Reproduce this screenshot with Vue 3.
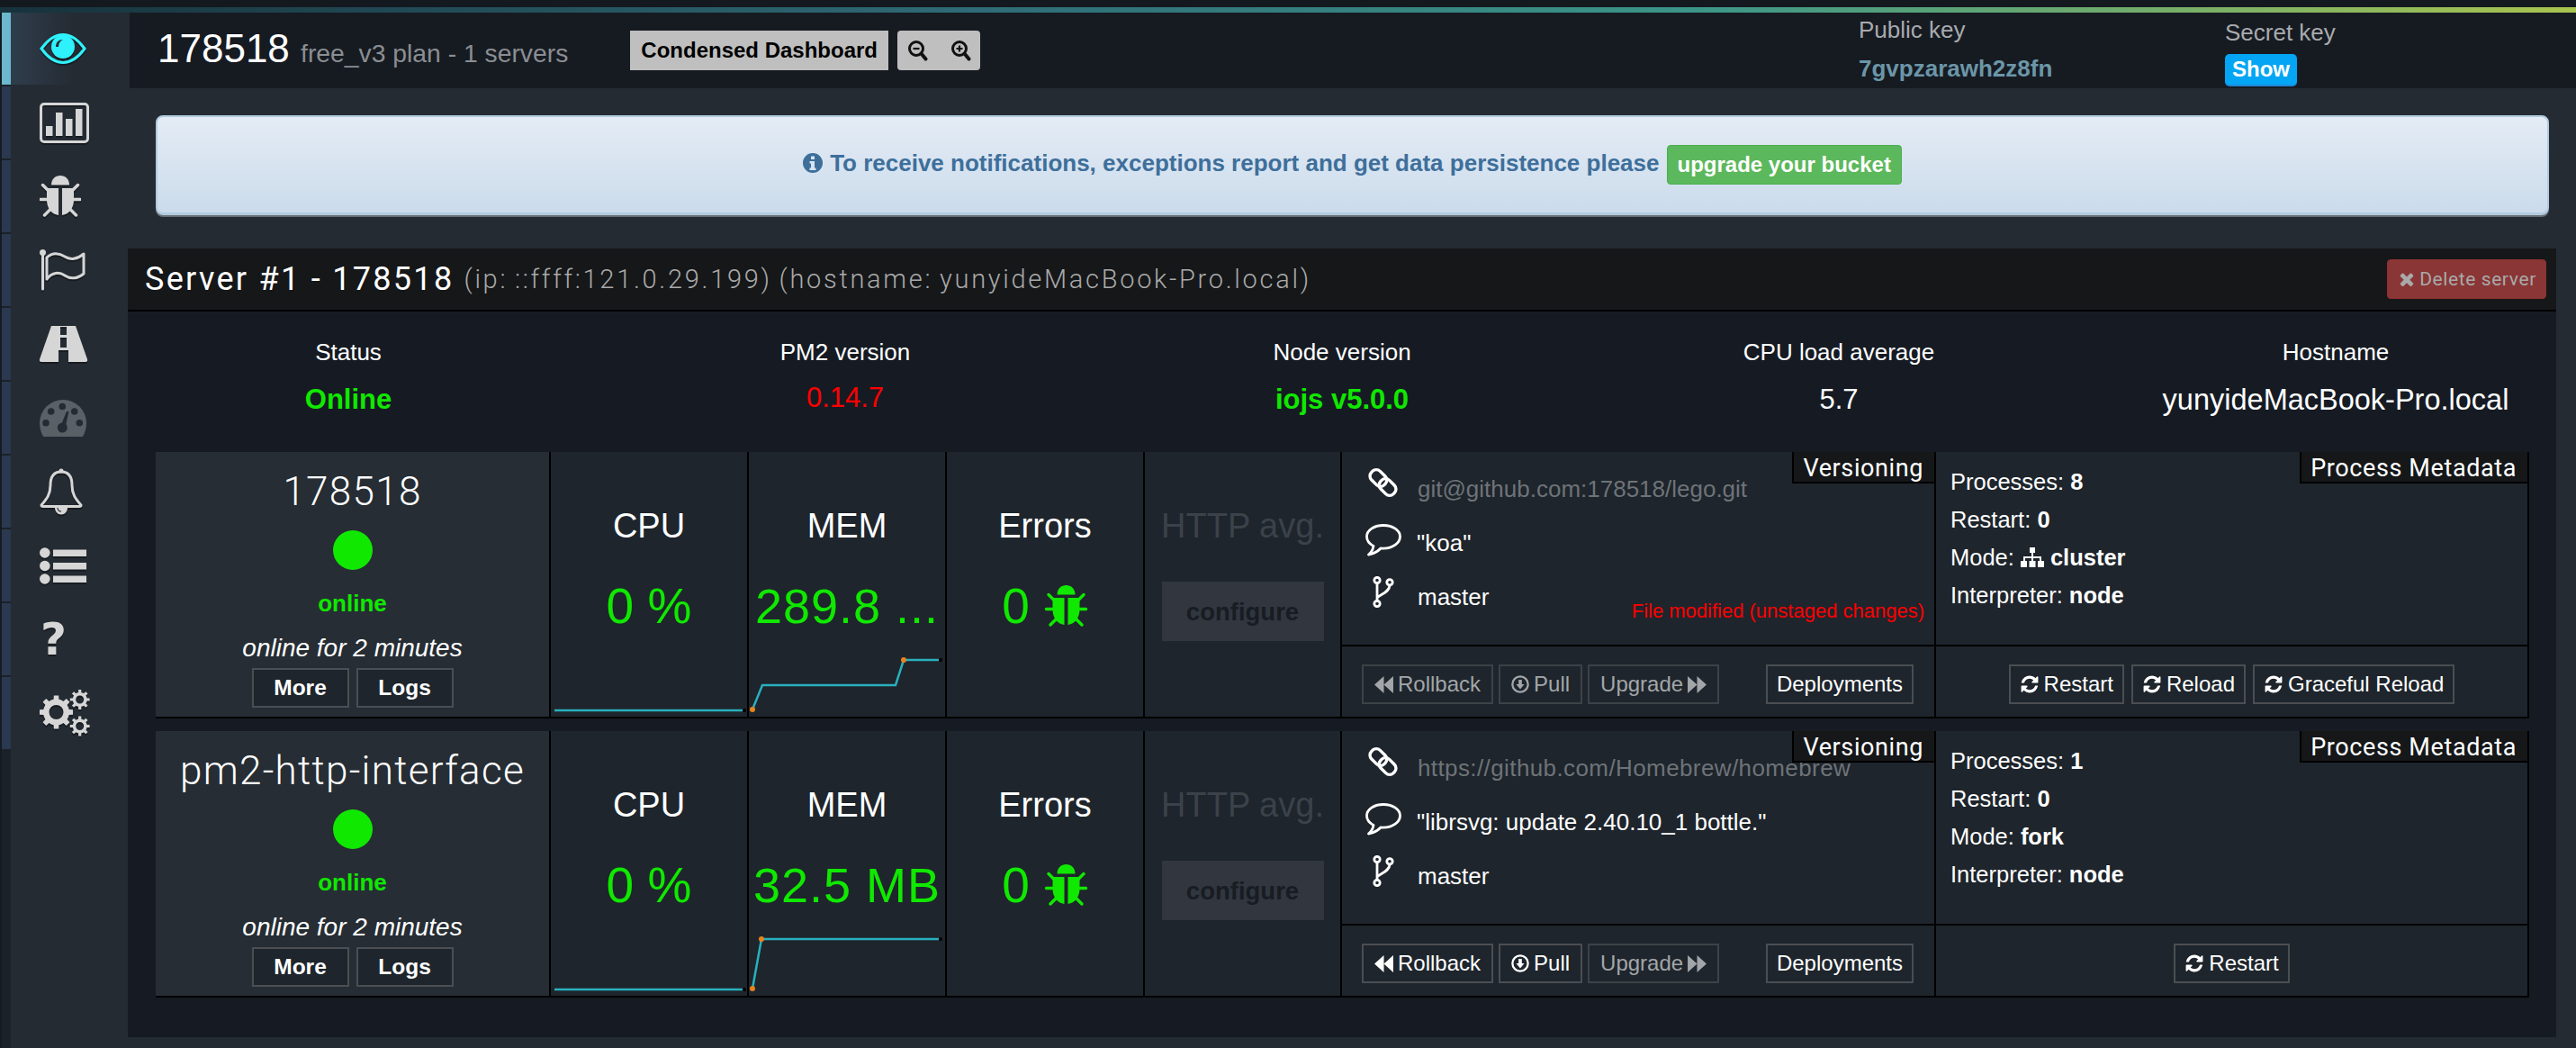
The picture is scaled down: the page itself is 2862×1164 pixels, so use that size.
<template>
  <div class="page">
    <svg class="defs" aria-hidden="true">
      <symbol id="i-bug" viewBox="0 0 46 47">
        <path d="M13 10.5C13 4 17.500 0 23 0s10 4 10 10.500z" fill="currentColor" />
        <path d="M8 14h13v30C13 43 8 36 8 27zM38 14H25v30c8-1 13-8 13-17z" fill="currentColor" />
        <path d="M3.500 10.500l6 6M42.500 10.500l-6 6M1 26.500h8M45 26.500h-8M5.500 44l7-7M40.500 44l-7-7" stroke="currentColor" stroke-width="3.500" stroke-linecap="round" fill="none" />
      </symbol>
      <symbol id="i-refresh" viewBox="0 0 1792 1792">
        <path fill="currentColor" d="M1639 1056q0 5-1 7-64 268-268 434.500t-478 166.500q-146 0-282.500-55t-243.500-157l-129 129q-19 19-45 19t-45-19-19-45v-448q0-26 19-45t45-19h448q26 0 45 19t19 45-19 45l-137 137q71 66 161 102t187 36q134 0 250-65t186-179q11-17 53-117 8-23 30-23h192q13 0 22.500 9.500t9.500 22.500zm25-800v448q0 26-19 45t-45 19h-448q-26 0-45-19t-19-45 19-45l138-138q-148-137-349-137-134 0-250 65t-186 179q-11 17-53 117-8 23-30 23h-199q-13 0-22.500-9.500t-9.500-22.500v-7q65-268 270-434.500t480-166.500q146 0 284 55.500t245 156.500l130-129q19-19 45-19t45 19 19 45z" />
      </symbol>
      <symbol id="i-back" viewBox="0 0 22 20">
        <path fill="currentColor" d="M11 0v20L0 10zM22 0v20L11 10z" />
      </symbol>
      <symbol id="i-forward" viewBox="0 0 22 20">
        <path fill="currentColor" d="M0 0v20l11-10zM11 0v20l11-10z" />
      </symbol>
      <symbol id="i-pull" viewBox="0 0 22 22">
        <circle cx="11" cy="11" r="9.500" fill="none" stroke="currentColor" stroke-width="2.500" />
        <path fill="currentColor" d="M9 5.500h4V11h3l-5 6-5-6h3z" />
      </symbol>
      <symbol id="i-link" viewBox="0 0 37 36">
        <g fill="none" stroke="currentColor" stroke-width="3.400">
          <rect x="3.400" y="6.250" width="20" height="13.500" rx="6" transform="rotate(45 13.400 13)" />
          <rect x="13.600" y="16.250" width="20" height="13.500" rx="6" transform="rotate(45 23.600 23)" />
        </g>
      </symbol>
      <symbol id="i-comment" viewBox="0 0 40 36">
        <path fill="none" stroke="currentColor" stroke-width="2.800" stroke-linejoin="round" d="M20 1.500C9.500 1.500 1.500 7 1.500 14c0 4.500 3 8 7.500 10.500-.5 3.500-3 7.500-5.500 9.500 5.500-1 10.500-3.500 13.500-7 1 0 2 .2 3 .2 10.500-.2 18.500-6.200 18.500-13.200S30.500 1.500 20 1.500z" />
      </symbol>
      <symbol id="i-branch" viewBox="0 0 24 35">
        <g fill="none" stroke="currentColor" stroke-width="2.800">
          <circle cx="5" cy="4.500" r="3.200" />
          <circle cx="19" cy="6.800" r="3.200" />
          <circle cx="5" cy="30.500" r="3.200" />
          <path d="M5 8v19M19 10c0 8-11 10-14 14" />
        </g>
      </symbol>
    </svg>

    <div class="topline"></div>

    <div class="shell">
      <nav class="sidebar">
        <div v-for="item in navItems" :key="item.name" :class="['nav-item', { active: item.name === 'eye' }]">
          <svg v-if="item.name === 'eye'" class="nav-icon eye" width="52" height="34" viewBox="0 0 52 34">
            <path d="M2 17C10 6 18 1.500 26 1.500S42 6 50 17C42 28 34 32.500 26 32.500S10 28 2 17z" fill="none" stroke="currentColor" stroke-width="3" />
            <circle cx="26" cy="15" r="13" fill="currentColor" />
            <path d="M18 15c0-5 3-8 8-8-3 1.500-5 4-5 8z" fill="#242b33" />
          </svg>
          <svg v-else-if="item.name === 'chart'" class="nav-icon" width="55" height="45" viewBox="0 0 55 45">
            <rect x="1.500" y="1.500" width="52" height="42" rx="3.500" fill="none" stroke="currentColor" stroke-width="3" />
            <path fill="currentColor" d="M7 26h7.500v11H7zM18 11h7.500v26H18zM29 18h7.500v19H29zM40 7h7.500v30H40z" />
          </svg>
          <svg v-else-if="item.name === 'bug'" class="nav-icon" width="46" height="47"><use href="#i-bug" /></svg>
          <svg v-else-if="item.name === 'flag'" class="nav-icon" width="51" height="46" viewBox="0 0 51 46">
            <circle cx="3.500" cy="3.500" r="3.500" fill="currentColor" />
            <path d="M3.500 4v40" stroke="currentColor" stroke-width="3" stroke-linecap="round" />
            <path d="M8 9c6-6 14-5 20-1s14 3 21-3v22c-7 6-15 6-21 2s-14-4-20 4z" fill="none" stroke="currentColor" stroke-width="3" stroke-linejoin="round" />
          </svg>
          <svg v-else-if="item.name === 'road'" class="nav-icon" width="53" height="40" viewBox="0 0 53 40">
            <path fill="currentColor" fill-rule="evenodd" d="M13 0h27l13 37q.5 3-2 3H32V27h-11v13H2q-2.500 0-2-3zM23 1v9h7V1zM23 13v11h7V13z" />
          </svg>
          <svg v-else-if="item.name === 'gauge'" class="nav-icon gauge" width="52" height="41" viewBox="0 0 52 41">
            <path fill="currentColor" d="M0 26a26 26 0 0 1 52 0c0 6-2 11-4 15H4c-2-4-4-9-4-15z" />
            <g fill="#242b33">
              <circle cx="7" cy="25.700" r="3.800" />
              <circle cx="12.700" cy="13" r="3.800" />
              <circle cx="25.300" cy="7.500" r="3.800" />
              <circle cx="38.700" cy="13" r="3.800" />
              <circle cx="44.300" cy="25.700" r="3.800" />
              <circle cx="25.300" cy="31" r="5.500" />
              <path d="M23 30l7-17h2.500l-4 18z" />
            </g>
          </svg>
          <svg v-else-if="item.name === 'bell'" class="nav-icon" width="48" height="52" viewBox="0 0 48 52">
            <path fill="none" stroke="currentColor" stroke-width="3" stroke-linejoin="round" d="M24 4c-9 0-12 7-12 15 0 11-5 16-10 22 0 1 1 1.500 2 1.500h40c1 0 2-.5 2-1.500-5-6-10-11-10-22 0-8-3-15-12-15z" />
            <circle cx="24" cy="3" r="2.500" fill="currentColor" />
            <path fill="currentColor" d="M17 44h14c0 4-3 7.500-7 7.500s-7-3.500-7-7.500z" />
            <path fill="none" stroke="#242b33" stroke-width="1.200" d="M20 44c0 2.500 2 4 4 4" />
          </svg>
          <svg v-else-if="item.name === 'list'" class="nav-icon" width="52" height="41" viewBox="0 0 52 41">
            <g fill="currentColor">
              <circle cx="5.800" cy="6" r="5.800" />
              <circle cx="5.800" cy="20.500" r="5.800" />
              <circle cx="5.800" cy="35" r="5.800" />
              <path d="M15 2.500h37V10H15zM15 17h37v7.500H15zM15 31.500h37V39H15z" />
            </g>
          </svg>
          <span v-else-if="item.name === 'help'" class="nav-icon help">?</span>
          <svg v-else class="nav-icon" width="56" height="52" viewBox="0 0 56 52">
            <path fill="currentColor" fill-rule="evenodd" :d="cogs" />
          </svg>
        </div>
      </nav>

      <main class="main">
        <header class="head">
          <h1 class="head-title">178518 <small>free_v3 plan - 1 servers</small></h1>
          <button class="grey-btn">Condensed Dashboard</button>
          <div class="grey-btn zoom-btn">
            <svg v-for="sym in ['M7.500 11h7', 'M7.500 11h7M11 7.500v7']" :key="sym" width="24" height="26" viewBox="0 0 24 26">
              <circle cx="11" cy="11" r="7.500" fill="none" stroke="#111" stroke-width="3" />
              <path d="M16.500 16.500l5 6" stroke="#111" stroke-width="4" stroke-linecap="round" />
              <path :d="sym" stroke="#111" stroke-width="2.200" />
            </svg>
          </div>
          <div class="keys">
            <div class="key-col public">
              <div class="key-label">Public key</div>
              <div class="key-value">7gvpzarawh2z8fn</div>
            </div>
            <div class="key-col secret">
              <div class="key-label">Secret key</div>
              <button class="show-btn">Show</button>
            </div>
          </div>
        </header>

        <div class="alert">
          <svg class="info" width="22" height="22" viewBox="0 0 22 22">
            <path fill="currentColor" fill-rule="evenodd" d="M11 0a11 11 0 1 0 0 22 11 11 0 0 0 0-22zM9 3.500h4v3.500H9zM7.500 9H13v7.500h1.500V19h-7v-2.500H9V11.500H7.500z" />
          </svg>
          <span class="alert-text">To receive notifications, exceptions report and get data persistence please</span>
          <button class="upgrade-btn">upgrade your bucket</button>
        </div>

        <section class="panel">
          <div class="panel-head">
            <span class="panel-title">Server #1 - 178518</span>
            <span class="panel-sub">(ip: ::ffff:121.0.29.199) (hostname: yunyideMacBook-Pro.local)</span>
            <button class="delete-btn">
              <svg width="22" height="22" viewBox="0 0 1792 1792"><path fill="currentColor" d="M1490 1322q0 40-28 68l-136 136q-28 28-68 28t-68-28l-294-294-294 294q-28 28-68 28t-68-28l-136-136q-28-28-28-68t28-68l294-294-294-294q-28-28-28-68t28-68l136-136q28-28 68-28t68 28l294 294 294-294q28-28 68-28t68 28l136 136q28 28 28 68t-28 68l-294 294 294 294q28 28 28 68z" /></svg>
              Delete server
            </button>
          </div>

          <div class="stats">
            <div v-for="stat in stats" :key="stat.label" class="stat">
              <div class="stat-label">{{ stat.label }}</div>
              <div :class="['stat-value', stat.tone]">{{ stat.value }}</div>
            </div>
          </div>

          <div v-for="proc in processes" :key="proc.name" class="proc">
            <div class="cell name-cell">
              <div class="proc-name">{{ proc.name }}</div>
              <div class="dot"></div>
              <div class="proc-state">online</div>
              <div class="proc-uptime">online for 2 minutes</div>
              <div class="name-btns">
                <button class="btn strong">More</button>
                <button class="btn strong">Logs</button>
              </div>
            </div>

            <div class="cell metric">
              <div class="metric-title">CPU</div>
              <div class="metric-value">0 %</div>
              <svg class="spark" width="218" height="71">
                <polyline points="4,64 213,64" class="spark-line" />
                <circle cx="215" cy="64" r="2" fill="#000" />
              </svg>
            </div>

            <div class="cell metric">
              <div class="metric-title">MEM</div>
              <div class="metric-value tight">{{ proc.mem }}</div>
              <svg class="spark" width="218" height="71">
                <polyline :points="proc.memLine" class="spark-line" />
                <circle v-for="pt in proc.memDots" :key="pt[0]" :cx="pt[0]" :cy="pt[1]" r="3" fill="#e8821e" />
                <circle cx="213" cy="8" r="2" fill="#000" />
              </svg>
            </div>

            <div class="cell metric">
              <div class="metric-title">Errors</div>
              <div class="metric-value errors">
                <span>0</span>
                <svg width="49" height="47"><use href="#i-bug" /></svg>
              </div>
            </div>

            <div class="cell metric">
              <div class="metric-title muted">HTTP avg.</div>
              <button class="configure-btn">configure</button>
            </div>

            <div class="cell split">
              <div class="split-top version">
                <div class="tag">Versioning</div>
                <div class="vrow url">
                  <svg class="vicon link" width="37" height="36"><use href="#i-link" /></svg>
                  <span :class="{ wide: !proc.modified }">{{ proc.url }}</span>
                </div>
                <div class="vrow">
                  <svg class="vicon comment" width="40" height="36"><use href="#i-comment" /></svg>
                  <span>{{ proc.comment }}</span>
                </div>
                <div class="vrow">
                  <svg class="vicon branch" width="24" height="35"><use href="#i-branch" /></svg>
                  <span>master</span>
                </div>
                <div v-if="proc.modified" class="modified">File modified (unstaged changes)</div>
              </div>
              <div class="split-bottom">
                <button :class="['btn', { dim: proc.locked }]">
                  <svg width="21" height="19"><use href="#i-back" /></svg> Rollback
                </button>
                <button :class="['btn', { dim: proc.locked }]">
                  <svg width="20" height="20"><use href="#i-pull" /></svg> Pull
                </button>
                <button class="btn dim">
                  Upgrade <svg width="21" height="19"><use href="#i-forward" /></svg>
                </button>
                <button class="btn deploy">Deployments</button>
              </div>
            </div>

            <div class="cell split">
              <div class="split-top meta">
                <div class="tag">Process Metadata</div>
                <div>Processes: <b>{{ proc.instances }}</b></div>
                <div>Restart: <b>0</b></div>
                <div class="mode">Mode:
                  <svg v-if="proc.mode === 'cluster'" width="26" height="24" viewBox="0 0 26 24">
                    <path fill="currentColor" d="M10 1h6v6h-6zM12 7h2v4h9v5h-2v-3h-7v3h-2v-3H5v3H3v-5h9zM0 16h7v7H0zM9.500 16h7v7h-7zM19 16h7v7h-7z" />
                  </svg>
                  <b>{{ proc.mode }}</b>
                </div>
                <div>Interpreter: <b>node</b></div>
              </div>
              <div class="split-bottom center">
                <button v-for="label in proc.actions" :key="label" class="btn">
                  <svg width="22" height="22"><use href="#i-refresh" /></svg> {{ label }}
                </button>
              </div>
            </div>
          </div>
        </section>
      </main>
    </div>
  </div>
</template>

<script setup>
const navItems = ['eye', 'chart', 'bug', 'flag', 'road', 'gauge', 'bell', 'list', 'help', 'cogs'].map((name) => ({ name }))

const stats = [
  { label: 'Status', value: 'Online', tone: 'good bold' },
  { label: 'PM2 version', value: '0.14.7', tone: 'bad' },
  { label: 'Node version', value: 'iojs v5.0.0', tone: 'good bold' },
  { label: 'CPU load average', value: '5.7', tone: '' },
  { label: 'Hostname', value: 'yunyideMacBook-Pro.local', tone: 'host' }
]

const processes = [
  {
    name: '178518',
    mem: '289.8 ...',
    memLine: '4,63 15,36 163,36 172,8 211,8',
    memDots: [[4, 63], [172, 8]],
    url: 'git@github.com:178518/lego.git',
    comment: '"koa"',
    modified: true,
    locked: true,
    instances: 8,
    mode: 'cluster',
    actions: ['Restart', 'Reload', 'Graceful Reload']
  },
  {
    name: 'pm2-http-interface',
    mem: '32.5 MB',
    memLine: '4,63 14,8 211,8',
    memDots: [[4, 63], [14, 8]],
    url: 'https://github.com/Homebrew/homebrew',
    comment: '"librsvg: update 2.40.10_1 bottle."',
    modified: false,
    locked: false,
    instances: 1,
    mode: 'fork',
    actions: ['Restart']
  }
]

// gear outline with a round hole, the three of them make the settings icon
function gear(cx, cy, outer, inner, teeth, hole) {
  const pts = []
  const step = (Math.PI * 2) / teeth
  for (let i = 0; i < teeth; i++) {
    const a = i * step
    const offsets = [[-0.5, inner], [-0.26, inner], [-0.18, outer], [0.18, outer], [0.26, inner]]
    offsets.forEach(([o, r]) => {
      const t = a + o * step
      pts.push(`${(cx + Math.cos(t) * r).toFixed(2)} ${(cy + Math.sin(t) * r).toFixed(2)}`)
    })
  }
  const ring = `M${cx - hole} ${cy}a${hole} ${hole} 0 1 0 ${hole * 2} 0a${hole} ${hole} 0 1 0 ${-hole * 2} 0z`
  return `M${pts.join('L')}z${ring}`
}

const cogs = gear(18.5, 25, 18.7, 14.5, 8, 8) + gear(44.7, 11, 11, 8, 8, 4.5) + gear(44.7, 40.5, 11, 8, 8, 4.5)
</script>

<style>
html, body {
  margin: 0;
  background: #242b33;
}
</style>

<style scoped>
.page {
  width: 2862px;
  height: 1164px;
  overflow: hidden;
  background: #141920;
  padding-top: 8px;
  box-sizing: border-box;
  font-family: "Liberation Sans", Arial, sans-serif;
  color: #fff;
}

.defs {
  position: absolute;
  width: 0;
  height: 0;
}

button {
  font-family: inherit;
  cursor: pointer;
}

.topline {
  height: 6px;
  background: linear-gradient(90deg, #17323c 0%, #2f6c77 38%, #3c9688 66%, #a9c44f 100%);
}

.shell {
  display: flex;
  height: 1150px;
}

/* sidebar */
.sidebar {
  width: 144px;
  flex: none;
  box-sizing: border-box;
  padding-left: 2px;
  background: linear-gradient(90deg, #161b22 2px, #1b2129 2px, #1b2129 12px, #242b33 12px);
}

.nav-item {
  height: 80px;
  margin-bottom: 2px;
  box-sizing: border-box;
  border-left: 10px solid #2a3950;
  padding-left: 32px;
  display: flex;
  align-items: center;
  color: #d6d6d6;
  background: #242b33;
}

.nav-item.active {
  border-left-color: #6bb8cf;
  background: linear-gradient(90deg, #2f3d4b 0, #2c3845 20px, #242b33 70px);
}

.nav-icon {
  filter: drop-shadow(0 2px 0 rgba(0, 0, 0, 0.35));
}

.nav-icon.eye {
  color: #2ef2fb;
}

.nav-icon.gauge {
  color: #596167;
  filter: none;
}

.nav-icon.help {
  font-family: "DejaVu Sans", sans-serif;
  font-weight: 700;
  font-size: 50px;
  line-height: 60px;
  margin-left: 1px;
}

/* header */
.main {
  flex: 1;
  min-width: 0;
  background: #242b33;
}

.head {
  height: 84px;
  box-sizing: border-box;
  padding-left: 31px;
  display: flex;
  align-items: center;
  background: #161b22;
}

.head-title {
  margin: 0 69px 0 0;
  font-size: 44px;
  font-weight: 400;
  white-space: nowrap;
  line-height: 50px;
}

.head-title small {
  font-size: 28.300px;
  color: #8b8e92;
}

.grey-btn {
  height: 44px;
  border: 0;
  padding: 0 12px;
  background: #bfbfbf;
  color: #000;
  font-size: 24px;
  font-weight: 700;
  margin-right: 10px;
}

.zoom-btn {
  width: 92px;
  box-sizing: border-box;
  padding: 0 10px;
  border-radius: 4px;
  display: flex;
  align-items: center;
  justify-content: space-between;
}

.keys {
  margin-left: auto;
  width: 797px;
  display: flex;
  align-self: flex-start;
}

.key-col.public {
  width: 407px;
  padding-top: 4px;
}

.key-col.secret {
  padding-top: 7px;
}

.key-label {
  font-size: 26px;
  line-height: 30px;
  color: #a8aaad;
}

.key-value {
  margin-top: 13px;
  font-size: 26px;
  line-height: 30px;
  font-weight: 700;
  color: #6c96a8;
}

.show-btn {
  display: block;
  margin-top: 9px;
  width: 80px;
  height: 36px;
  padding: 0;
  border: 0;
  border-bottom: 2px solid #1e88d8;
  border-radius: 5px;
  background: #03a5f4;
  color: #fff;
  font-size: 24px;
  font-weight: 700;
}

/* alert */
.alert {
  margin: 30px 0 0 29px;
  width: 2659px;
  height: 111px;
  box-sizing: border-box;
  display: flex;
  align-items: center;
  justify-content: center;
  gap: 7px;
  border: 2px solid #b2cbe0;
  border-bottom-width: 3px;
  border-radius: 8px;
  background: linear-gradient(180deg, #e4ecf5, #cbdbeb);
  box-shadow: 0 2px 0 #6a6f74;
  color: #3e6f9b;
}

.alert-text {
  font-size: 26px;
  font-weight: 700;
  margin-bottom: 4px;
  margin-left: 1px;
}

.info {
  flex: none;
  margin-bottom: 4px;
}

.upgrade-btn {
  height: 44px;
  margin-left: 1px;
  padding: 0 11px;
  border: 1px solid #4cae4c;
  border-radius: 4px;
  background: #5cb85c;
  color: #fff;
  font-size: 24px;
  font-weight: 700;
}

/* server panel */
.panel {
  margin: 37px 0 0 -2px;
  width: 2698px;
  height: 876px;
  box-sizing: border-box;
  background: #161b23;
  overflow: hidden;
}

.panel-head {
  height: 70px;
  box-sizing: border-box;
  border-bottom: 2px solid #000;
  padding: 0 11px 0 19px;
  display: flex;
  align-items: center;
  background: #151719;
  font-family: Roboto, sans-serif;
  white-space: nowrap;
}

.panel-title {
  font-size: 36px;
  letter-spacing: 2.300px;
}

.panel-sub {
  margin-left: 11px;
  font-size: 29px;
  font-weight: 300;
  letter-spacing: 2.700px;
  word-spacing: -2px;
  color: #a9a9a9;
}

.delete-btn {
  margin-left: auto;
  width: 177px;
  height: 44px;
  padding: 0;
  border: 1px solid #8f3030;
  border-radius: 4px;
  background: #8a3636;
  color: #a9a9a9;
  font-family: Roboto, sans-serif;
  font-size: 21px;
  letter-spacing: 0.600px;
  display: flex;
  align-items: center;
  justify-content: center;
  gap: 3px;
}

.stats {
  margin-left: -31px;
  width: 2760px;
  height: 118px;
  padding-top: 30px;
  box-sizing: border-box;
  display: grid;
  grid-template-columns: repeat(5, 552px);
  text-align: center;
}

.stat-label {
  font-size: 26px;
  line-height: 30px;
}

.stat-value {
  margin-top: 18px;
  font-size: 31px;
  line-height: 40px;
}

.stat-value.bad {
  margin-top: 16px;
  color: #f00;
}

.stat-value.host {
  font-size: 32.500px;
}

.good {
  color: #10e800;
}

.bold {
  font-weight: 700;
}

/* process rows */
.proc {
  margin: 38px 0 0 31px;
  width: 2637px;
  height: 296px;
  box-sizing: border-box;
  display: grid;
  grid-template-columns: 437px 218px 218px 218px 217px 658px 657px;
  gap: 2px;
  padding-bottom: 2px;
  background: #000;
}

.proc + .proc {
  margin-top: 14px;
}

.cell {
  background: #1e252c;
  min-width: 0;
}

.name-cell {
  background: #262d34;
  display: flex;
  flex-direction: column;
  align-items: center;
}

.proc-name {
  margin-top: 19px;
  height: 50px;
  font-family: Roboto, sans-serif;
  font-size: 44px;
  line-height: 50px;
  font-weight: 300;
  letter-spacing: 1.300px;
  white-space: nowrap;
}

.dot {
  margin-top: 18px;
  width: 44px;
  height: 44px;
  border-radius: 50%;
  background: #10e800;
}

.proc-state {
  margin-top: 22px;
  font-size: 26px;
  line-height: 30px;
  font-weight: 700;
  color: #10e800;
}

.proc-uptime {
  margin-top: 18px;
  font-size: 28px;
  line-height: 34px;
  font-style: italic;
}

.name-btns {
  margin-top: 5px;
  display: flex;
  gap: 8px;
}

.btn {
  height: 44px;
  padding: 0 10px;
  box-sizing: border-box;
  border: 2px solid #4b4e52;
  background: #1e252c;
  color: #fff;
  font-size: 24px;
  white-space: nowrap;
  display: inline-flex;
  align-items: center;
  justify-content: center;
  gap: 5px;
}

.btn.strong {
  width: 108px;
  font-weight: 700;
  font-size: 24.500px;
}

.btn.dim {
  color: #a3a6a9;
  border-color: #3d4247;
}

.split-bottom .btn:not(.deploy) {
  padding: 0 12px;
}

.split-bottom.center .btn:not(.deploy) {
  padding: 0 10px;
}

.metric {
  display: flex;
  flex-direction: column;
  align-items: center;
  padding-top: 60px;
  overflow: hidden;
}

.metric-title {
  font-size: 38px;
  line-height: 44px;
  white-space: nowrap;
}

.metric-title.muted {
  color: #3b424a;
}

.metric-value {
  margin-top: 37px;
  height: 60px;
  font-size: 55px;
  line-height: 60px;
  color: #10e800;
  white-space: nowrap;
}

.metric-value.tight {
  font-size: 54px;
  letter-spacing: 1px;
}

.metric-value.errors {
  display: flex;
  align-items: center;
  gap: 16px;
}

.spark {
  margin-top: 22px;
  flex: none;
}

.spark-line {
  fill: none;
  stroke: #2ab0bd;
  stroke-width: 2.500;
}

.configure-btn {
  margin-top: 40px;
  width: 180px;
  height: 66px;
  border: 0;
  padding: 2px 0 0;
  background: #31363f;
  color: #181c23;
  font-size: 27.500px;
  font-weight: 700;
}

.split {
  display: flex;
  flex-direction: column;
}

.split-top {
  position: relative;
  height: 216px;
  box-sizing: border-box;
  border-bottom: 2px solid #000;
}

.tag {
  position: absolute;
  top: 0;
  right: 0;
  height: 35px;
  box-sizing: border-box;
  padding: 0 12px 0 10px;
  border-left: 2px solid #000;
  border-bottom: 2px solid #000;
  background: #151719;
  font-family: Roboto, sans-serif;
  font-size: 27px;
  line-height: 36px;
  letter-spacing: 0.600px;
  white-space: nowrap;
}

.version {
  padding: 11px 0 0 27px;
}

.vrow {
  height: 60px;
  display: flex;
  align-items: center;
  font-size: 26px;
  white-space: nowrap;
}

.vrow.url span {
  color: #6e7378;
}

.vrow.url .wide {
  letter-spacing: 0.400px;
}

.vicon {
  flex: none;
}

.vicon.link {
  margin-right: 20px;
  margin-bottom: 14px;
}

.vicon.comment {
  margin-right: 17px;
  margin-left: -1px;
  margin-bottom: 6px;
}

.vicon.branch {
  margin-left: 7px;
  margin-right: 26px;
  margin-bottom: 12px;
}

.modified {
  position: absolute;
  right: 11px;
  bottom: 24px;
  font-size: 22px;
  line-height: 26px;
  color: #f00;
  white-space: nowrap;
}

.split-bottom {
  flex: 1;
  box-sizing: border-box;
  padding: 20px 23px 0 22px;
  display: flex;
  align-items: flex-start;
  gap: 6px;
}

.split-bottom.center {
  justify-content: center;
  gap: 8px;
  padding-left: 0;
  padding-right: 0;
}

.deploy {
  margin-left: auto;
}

.meta {
  padding: 12px 0 0 16px;
  font-size: 25.500px;
  line-height: 42px;
}

.mode {
  display: flex;
  align-items: center;
  gap: 7px;
}
</style>
